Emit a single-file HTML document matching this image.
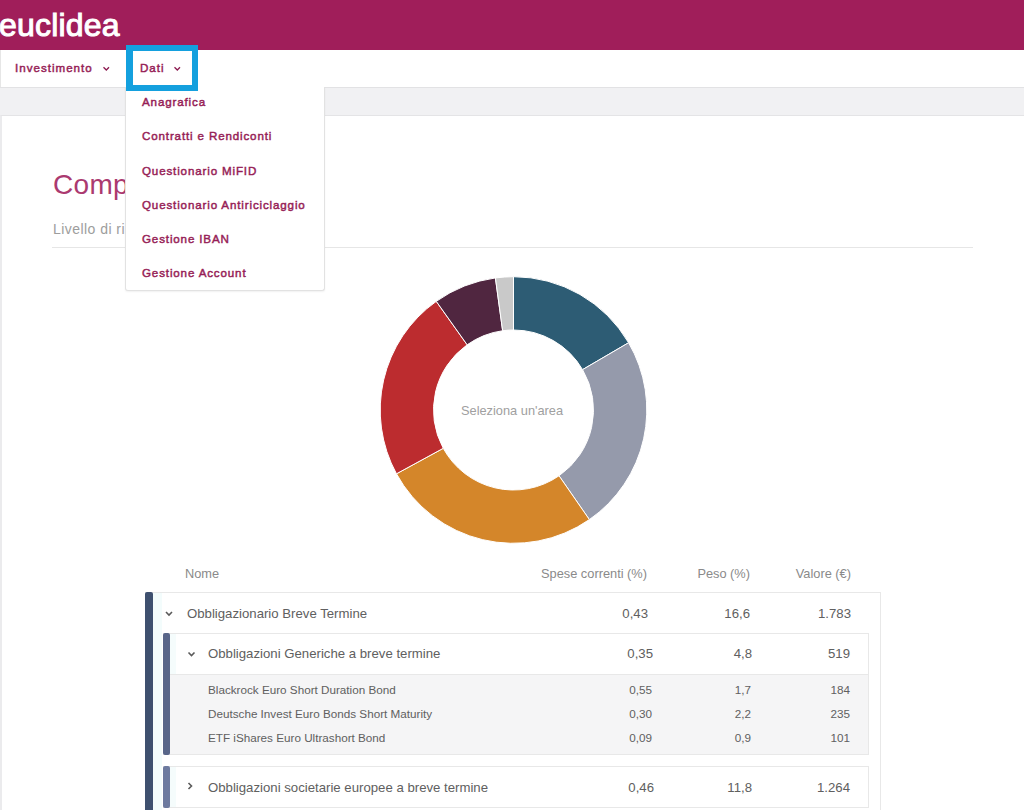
<!DOCTYPE html>
<html><head><meta charset="utf-8">
<style>
*{box-sizing:border-box}
html,body{margin:0;padding:0;width:1024px;height:810px;overflow:hidden;background:#f1f1f3;font-family:"Liberation Sans",sans-serif}
.a{position:absolute;white-space:nowrap}
#hdr{position:absolute;left:0;top:0;width:1024px;height:50px;background:#a01e5a}
#logo{left:-1px;top:7px;font-size:32px;font-weight:normal;color:#fff;letter-spacing:0.2px;-webkit-text-stroke:1px #fff}
#nav{position:absolute;left:0;top:50px;width:1024px;height:38px;background:#fff;border-bottom:1px solid #e2e2e4}
.ni{position:absolute;top:0;height:37px;font-size:11.6px;font-weight:normal;color:#961d56;letter-spacing:0.85px;-webkit-text-stroke:0.45px #961d56}
#inv{left:0;width:125px;border-left:1px solid #e6e6e6}
#bluebox{position:absolute;left:126px;top:45px;width:72px;height:46px;border:6px solid #14a0de;border-left-width:7px}
#card{position:absolute;left:0px;top:115px;width:1030px;height:700px;background:#fff;border:1px solid #e4e4e6;border-left:2px solid #ebebed}
#h1{left:53px;top:169px;font-size:28px;color:#ab3a70;letter-spacing:0.3px}
#sub{left:53px;top:221px;font-size:14px;color:#9d9d9d;letter-spacing:0.45px}
#hr{position:absolute;left:52px;top:247px;width:921px;height:1px;background:#e6e6e6}
#dd{position:absolute;left:125px;top:87px;width:200px;height:204px;background:#fff;border:1px solid #e2e2e2;border-top:none;box-shadow:0 1px 2px rgba(0,0,0,0.06);border-radius:0 0 3px 3px}
#dd div{position:absolute;left:16px;font-size:11.6px;font-weight:normal;color:#961d56;white-space:nowrap;letter-spacing:0.85px;-webkit-text-stroke:0.45px #961d56}
svg{position:absolute;left:0;top:0}
.th{top:566px;font-size:12.8px;color:#8a8a8a}
.v{text-align:right;color:#606060}
.box{position:absolute;background:#fff;border:1px solid #e8e8e8}
.bar{position:absolute;left:0;top:0}
</style></head><body>
<div id="hdr"><div class="a" id="logo">euclidea</div></div>
<div id="nav">
  <div class="ni" id="inv"><span class="a" style="left:14px;top:11px;letter-spacing:1px">Investimento</span></div>
  <div class="ni" style="left:126px;width:72px"><span class="a" style="left:14px;top:11px;letter-spacing:1px">Dati</span></div>
</div>
<svg width="1024" height="810">
  <polyline points="103.5,67.3 106.3,70 109,67.3" fill="none" stroke="#8c1a50" stroke-width="1.3"/>
  <polyline points="174.5,67.3 177.3,70 180,67.3" fill="none" stroke="#8c1a50" stroke-width="1.3"/>
</svg>
<div id="card"></div>
<div class="a" id="h1">Composizione</div>
<div class="a" id="sub">Livello di rischio</div>
<div id="hr"></div>
<svg width="1024" height="810">
<path d="M513.50 276.70A133.3 133.3 0 0 1 628.59 342.75L582.57 369.64A80 80 0 0 0 513.50 330.00Z" fill="#2d5c74" stroke="#fff" stroke-width="1"/>
<path d="M628.59 342.75A133.3 133.3 0 0 1 589.38 519.59L559.04 475.77A80 80 0 0 0 582.57 369.64Z" fill="#959aab" stroke="#fff" stroke-width="1"/>
<path d="M589.38 519.59A133.3 133.3 0 0 1 396.46 473.81L443.26 448.30A80 80 0 0 0 559.04 475.77Z" fill="#d4862a" stroke="#fff" stroke-width="1"/>
<path d="M396.46 473.81A133.3 133.3 0 0 1 436.28 301.34L467.16 344.79A80 80 0 0 0 443.26 448.30Z" fill="#bc2c2f" stroke="#fff" stroke-width="1"/>
<path d="M436.28 301.34A133.3 133.3 0 0 1 495.41 277.93L502.64 330.74A80 80 0 0 0 467.16 344.79Z" fill="#502640" stroke="#fff" stroke-width="1"/>
<path d="M495.41 277.93A133.3 133.3 0 0 1 513.50 276.70L513.50 330.00A80 80 0 0 0 502.64 330.74Z" fill="#c9c9c9" stroke="#fff" stroke-width="1"/>
</svg>
<div class="a" style="left:461px;top:403px;font-size:12.8px;color:#a0a0a0">Seleziona un'area</div>

<div class="a th" style="left:185px">Nome</div>
<div class="a th" style="right:377px">Spese correnti (%)</div>
<div class="a th" style="right:274px">Peso (%)</div>
<div class="a th" style="right:173px">Valore (€)</div>

<!-- outer box -->
<div class="box" style="left:145px;top:592px;width:736px;height:240px"></div>
<div style="position:absolute;left:145px;top:592px;width:8px;height:240px;background:#3e506f;border-radius:2px"></div>
<div style="position:absolute;left:153px;top:593px;width:9px;height:230px;background:#f3fcfc"></div>
<div class="a" style="left:187px;top:606px;font-size:13.2px;color:#606060">Obbligazionario Breve Termine</div>
<div class="a v" style="right:376px;top:606px;font-size:13.2px">0,43</div>
<div class="a v" style="right:274px;top:606px;font-size:13.2px">16,6</div>
<div class="a v" style="right:173px;top:606px;font-size:13.2px">1.783</div>

<!-- inner box 1 -->
<div class="box" style="left:163px;top:633px;width:706px;height:122px"></div>
<div style="position:absolute;left:164px;top:674px;width:704px;height:80px;background:#f5f5f6;border-top:1px solid #e8e8e8"></div>
<div style="position:absolute;left:163px;top:633px;width:7px;height:122px;background:#586689;border-radius:2px"></div>
<div style="position:absolute;left:170px;top:634px;width:6px;height:40px;background:#f5fcfc"></div>
<div class="a" style="left:208px;top:646px;font-size:13.2px;color:#606060">Obbligazioni Generiche a breve termine</div>
<div class="a v" style="right:371px;top:646px;font-size:13.2px">0,35</div>
<div class="a v" style="right:272px;top:646px;font-size:13.2px">4,8</div>
<div class="a v" style="right:174px;top:646px;font-size:13.2px">519</div>

<div class="a" style="left:208px;top:683px;font-size:11.7px;color:#606060">Blackrock Euro Short Duration Bond</div>
<div class="a" style="left:208px;top:707px;font-size:11.7px;color:#606060">Deutsche Invest Euro Bonds Short Maturity</div>
<div class="a" style="left:208px;top:731px;font-size:11.7px;color:#606060">ETF iShares Euro Ultrashort Bond</div>
<div class="a v" style="right:372px;top:683px;font-size:11.7px">0,55</div>
<div class="a v" style="right:273px;top:683px;font-size:11.7px">1,7</div>
<div class="a v" style="right:174px;top:683px;font-size:11.7px">184</div>
<div class="a v" style="right:372px;top:707px;font-size:11.7px">0,30</div>
<div class="a v" style="right:273px;top:707px;font-size:11.7px">2,2</div>
<div class="a v" style="right:174px;top:707px;font-size:11.7px">235</div>
<div class="a v" style="right:372px;top:731px;font-size:11.7px">0,09</div>
<div class="a v" style="right:273px;top:731px;font-size:11.7px">0,9</div>
<div class="a v" style="right:174px;top:731px;font-size:11.7px">101</div>

<svg width="1024" height="810">
  <polyline points="166,612 169,615 172,612" fill="none" stroke="#5a5a5a" stroke-width="1.6"/>
  <polyline points="188.5,652.5 191.5,655.5 194.5,652.5" fill="none" stroke="#5a5a5a" stroke-width="1.6"/>
</svg>
<!-- inner box 2 -->
<div class="box" style="left:163px;top:766px;width:706px;height:42px"></div>
<div style="position:absolute;left:163px;top:766px;width:7px;height:42px;background:#6c7a9f;border-radius:2px"></div>
<div style="position:absolute;left:170px;top:767px;width:6px;height:40px;background:#f5fcfc"></div>
<svg width="1024" height="810">
  <polyline points="188.5,783 191.5,786 188.5,789" fill="none" stroke="#5a5a5a" stroke-width="1.6"/>
</svg>
<div class="a" style="left:208px;top:780px;font-size:13.2px;color:#606060">Obbligazioni societarie europee a breve termine</div>
<div class="a v" style="right:370px;top:780px;font-size:13.2px">0,46</div>
<div class="a v" style="right:272px;top:780px;font-size:13.2px">11,8</div>
<div class="a v" style="right:174px;top:780px;font-size:13.2px">1.264</div>

<div id="dd">
  <div style="top:8px">Anagrafica</div>
  <div style="top:42px">Contratti e Rendiconti</div>
  <div style="top:77px">Questionario MiFID</div>
  <div style="top:111px">Questionario Antiriciclaggio</div>
  <div style="top:145px">Gestione IBAN</div>
  <div style="top:179px">Gestione Account</div>
</div>
<div id="bluebox"></div>
</body></html>
